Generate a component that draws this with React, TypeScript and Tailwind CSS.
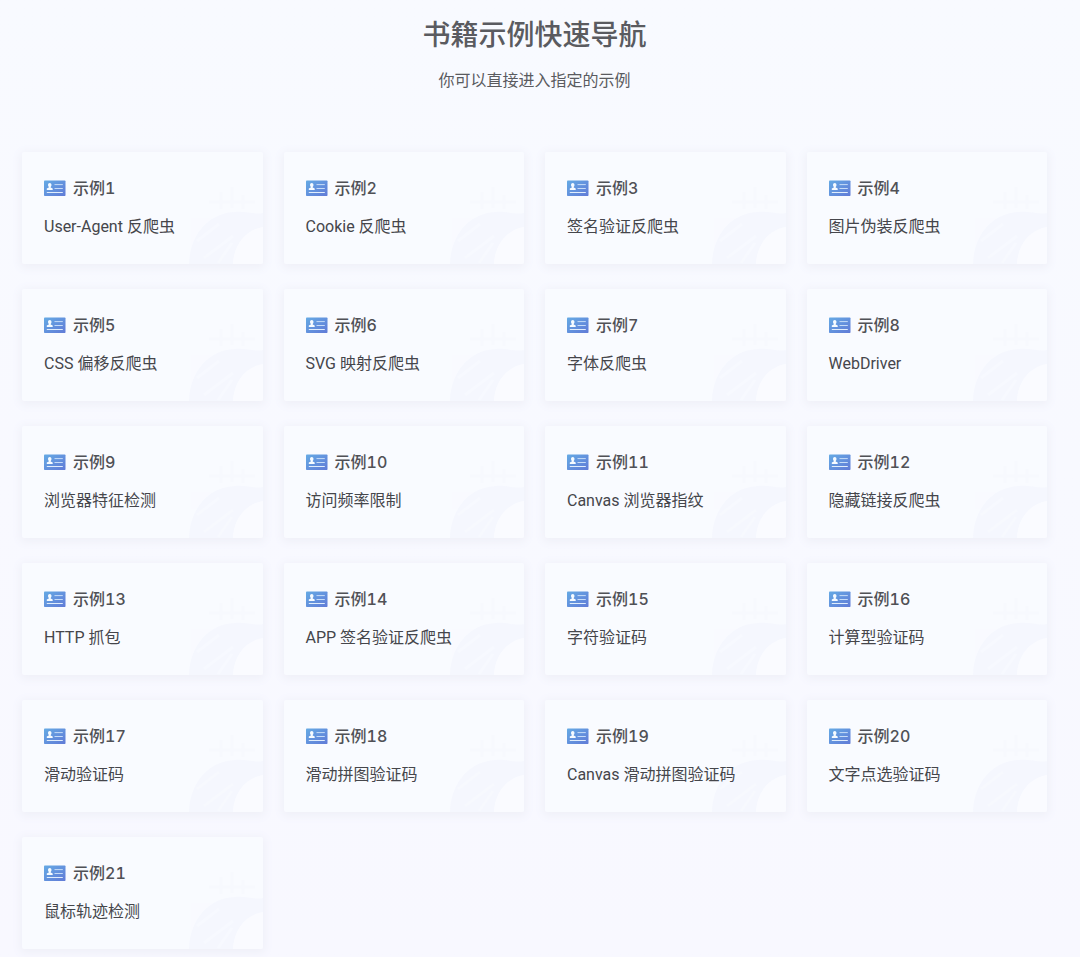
const examples = [
  'User-Agent 反爬虫',
  'Cookie 反爬虫',
  '签名验证反爬虫',
  '图片伪装反爬虫',
  'CSS 偏移反爬虫',
  'SVG 映射反爬虫',
  '字体反爬虫',
  'WebDriver',
  '浏览器特征检测',
  '访问频率限制',
  'Canvas 浏览器指纹',
  '隐藏链接反爬虫',
  'HTTP 抓包',
  'APP 签名验证反爬虫',
  '字符验证码',
  '计算型验证码',
  '滑动验证码',
  '滑动拼图验证码',
  'Canvas 滑动拼图验证码',
  '文字点选验证码',
  '鼠标轨迹检测',
];

function CardIcon() {
  return (
    <svg viewBox="0 0 22 16" className="h-4 w-[22px] shrink-0" aria-hidden="true">
      <rect y=".5" width="21.5" height="15.5" rx=".8" fill="url(#icon-fill)" />
      <path
        d="M5.7 3c1.1 0 1.8.8 1.8 2 0 .8-.3 1.5-.8 1.9v.7l2 .8v1.5H2.8V8.4l2-.8v-.7C4.3 6.5 4 5.800 4 5c0-1.2.7-2 1.7-2z"
        fill="#f6fbff"
      />
      <path d="M10.5 4.6h8.3M10.5 8.5h8.3" stroke="#c6dcf8" strokeWidth="1" />
      <path d="M2.8 12.5h16" stroke="#e0edfc" strokeWidth="1.1" />
    </svg>
  );
}

function Watermark() {
  return (
    <svg viewBox="0 0 76 80" className="absolute right-0 bottom-0 h-20 w-19" aria-hidden="true">
      <path d="M2 80C3 50 22 29 48 28c12-1 20 3 28 1v14C59 46 47 60 46 80z" fill="url(#mark-fill)" />
      <path d="M10 57l22-17M17 74l29-22M31 79l14-20" stroke="#f9fbff" strokeWidth="3" opacity=".6" />
      <path d="M34 25V8M45 24V3M56 25V11M22 18h46" stroke="#f5f7fe" strokeWidth="3" opacity=".4" />
      <path d="M46 80c1-20 13-34 30-37v37z" fill="#fafbff" />
    </svg>
  );
}

export default function App() {
  return (
    <main className="min-h-screen bg-linear-to-b from-[#f8faff] to-[#f8f8ff] pt-4 pr-[33px] pb-2 pl-[22px] font-['Inter','Noto_Sans_CJK_SC',sans-serif] text-[#45464b]">
      <svg className="absolute h-0 w-0" aria-hidden="true">
        <defs>
          <linearGradient id="icon-fill" x1="0" y1="0" x2="1" y2="1">
            <stop stopColor="#65aae4" />
            <stop offset="1" stopColor="#617bd7" />
          </linearGradient>
          <linearGradient id="mark-fill" x1="0" y1="1" x2="1" y2="0">
            <stop stopColor="#f5f7fe" />
            <stop offset="1" stopColor="#f5f7fe" />
          </linearGradient>
        </defs>
      </svg>
      <header className="mb-[60px] text-center text-[#5a5b60]">
        <h1 className="text-[28px] leading-[38px] font-medium">书籍示例快速导航</h1>
        <p className="mt-[14px] text-base leading-6">你可以直接进入指定的示例</p>
      </header>
      <nav
        aria-label="书籍示例"
        className="grid grid-cols-2 gap-x-[21px] gap-y-[25px] md:grid-cols-4"
      >
        {examples.map((name, index) => (
          <a
            key={name}
            href={`#example-${index + 1}`}
            className="relative min-h-28 overflow-hidden rounded-xs bg-[#f9fbff] px-[22px] pt-6 pb-[25px] shadow-[0_2px_10px_2px_#eff0f8]"
          >
            <Watermark />
            <div className="relative flex items-center gap-[7px]">
              <CardIcon />
              <h2 className="text-base leading-6 font-medium text-[#505156] tabular-nums">示例{index + 1}</h2>
            </div>
            <p className="relative mt-[15px] font-['Roboto','Noto_Sans_CJK_SC',sans-serif] text-base leading-6">
              {name}
            </p>
          </a>
        ))}
      </nav>
    </main>
  );
}
